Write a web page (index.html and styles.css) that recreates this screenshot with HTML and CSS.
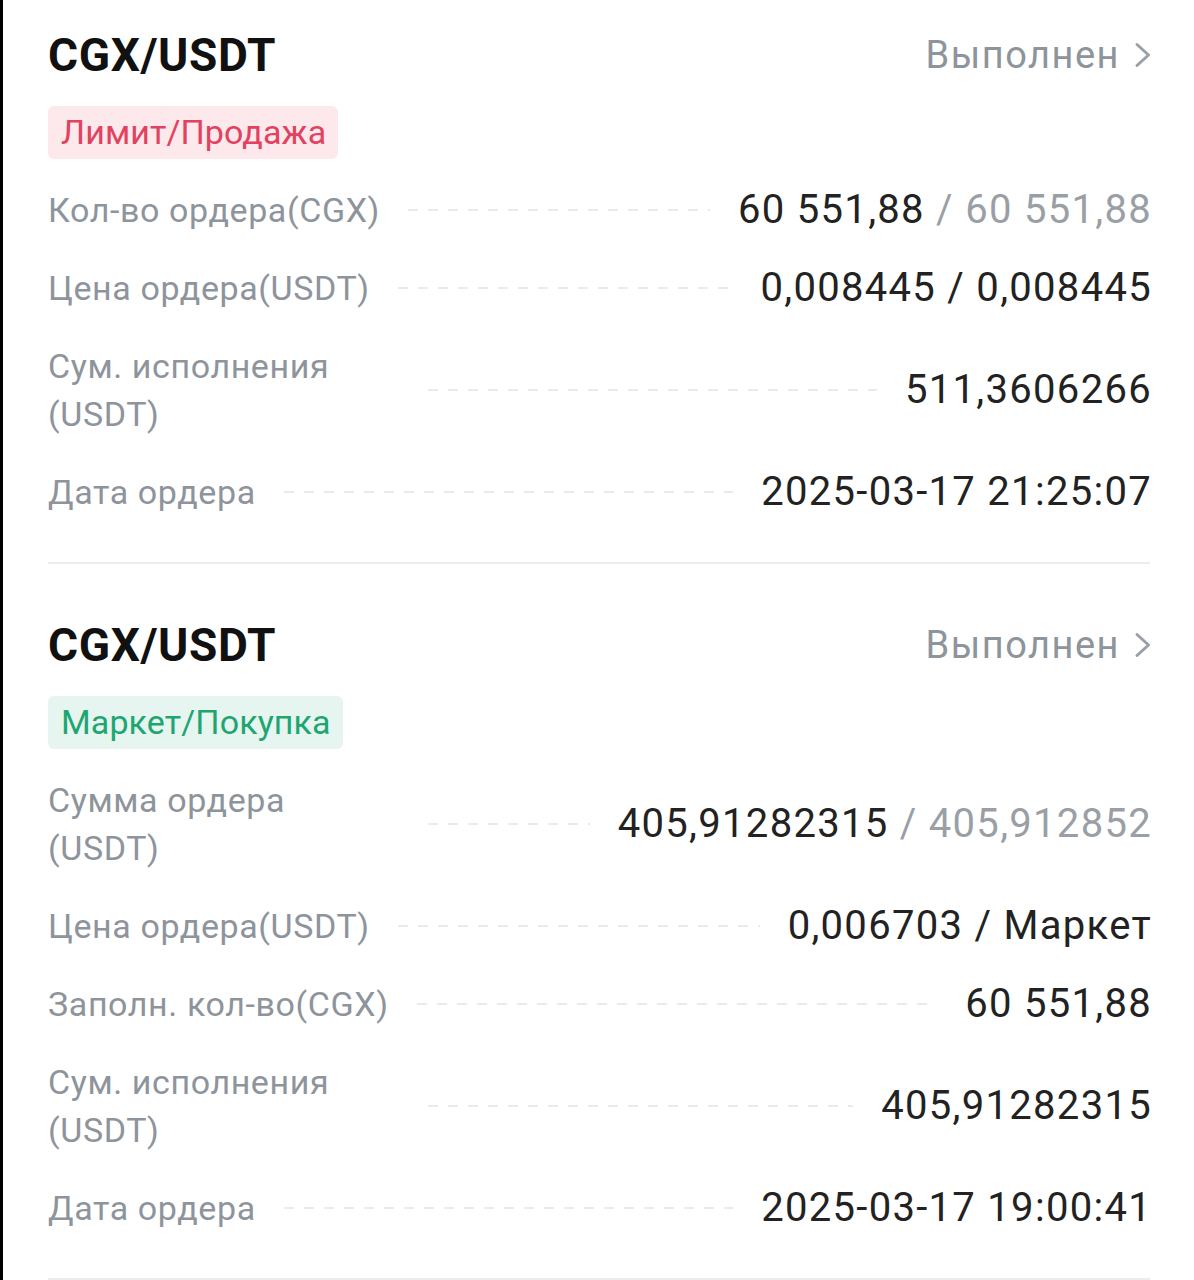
FILE: index.html
```html
<!DOCTYPE html>
<html lang="ru">
<head>
<meta charset="UTF-8">
<meta name="viewport" content="width=device-width, initial-scale=1.0">
<title>История ордеров</title>
<link rel="stylesheet" href="styles.css">
</head>
<body>

<div class="orders">
    <div class="order">
        <div class="order-head">
            <div class="pair">CGX/USDT</div>
            <div class="status">Выполнен
                <svg class="chevron" viewBox="0 0 18 26" width="18" height="26"><path d="M3 2.5 L14.5 13 L3 23.5" fill="none" stroke="#9aa0a8" stroke-width="3" stroke-linecap="round" stroke-linejoin="round"/></svg>
            </div>
        </div>
        <div class="badge badge-sell">Лимит/Продажа</div>
        <div class="rows">
            <div class="row">
                <div class="label">Кол-во ордера(CGX)</div>
                <div class="leader"></div>
                <div class="value">60 551,88 <span class="muted">/ 60 551,88</span></div>
            </div>
            <div class="row">
                <div class="label">Цена ордера(USDT)</div>
                <div class="leader"></div>
                <div class="value">0,008445 / 0,008445</div>
            </div>
            <div class="row">
                <div class="label">Сум. исполнения (USDT)</div>
                <div class="leader"></div>
                <div class="value">511,3606266</div>
            </div>
            <div class="row">
                <div class="label">Дата ордера</div>
                <div class="leader"></div>
                <div class="value">2025-03-17 21:25:07</div>
            </div>
        </div>
    </div>

    <div class="order">
        <div class="order-head">
            <div class="pair">CGX/USDT</div>
            <div class="status">Выполнен
                <svg class="chevron" viewBox="0 0 18 26" width="18" height="26"><path d="M3 2.5 L14.5 13 L3 23.5" fill="none" stroke="#9aa0a8" stroke-width="3" stroke-linecap="round" stroke-linejoin="round"/></svg>
            </div>
        </div>
        <div class="badge badge-buy">Маркет/Покупка</div>
        <div class="rows">
            <div class="row">
                <div class="label">Сумма ордера (USDT)</div>
                <div class="leader"></div>
                <div class="value">405,91282315 <span class="muted">/ 405,912852</span></div>
            </div>
            <div class="row">
                <div class="label">Цена ордера(USDT)</div>
                <div class="leader"></div>
                <div class="value">0,006703 / Маркет</div>
            </div>
            <div class="row">
                <div class="label">Заполн. кол-во(CGX)</div>
                <div class="leader"></div>
                <div class="value">60 551,88</div>
            </div>
            <div class="row">
                <div class="label">Сум. исполнения (USDT)</div>
                <div class="leader"></div>
                <div class="value">405,91282315</div>
            </div>
            <div class="row">
                <div class="label">Дата ордера</div>
                <div class="leader"></div>
                <div class="value">2025-03-17 19:00:41</div>
            </div>
        </div>
    </div>
</div>

</body>
</html>
```

FILE: styles.css
```css
/* Base */
* {
    box-sizing: border-box;
}
body {
    margin: 0;
    background: #fff;
    font-family: Roboto, "Noto Sans", sans-serif;
    color: #222;
}
.orders {
    border-left: 3px solid #000;
    min-height: 1280px;
    padding: 0 44px 0 45px;
}

/* Order card */
.order {
    padding: 54px 0 46px;
    border-bottom: 2px solid #ededed;
}
.order:first-child {
    padding-top: 28px;
}
.order-head {
    display: flex;
    justify-content: space-between;
    align-items: center;
    height: 54px;
}
.pair {
    font-size: 46px;
    font-weight: 700;
    letter-spacing: 0.6px;
    color: #111;
}
.status {
    display: flex;
    align-items: center;
    gap: 14px;
    margin-right: -2px;
    font-size: 38px;
    letter-spacing: 1.5px;
    color: #8e949c;
}
.badge {
    display: inline-block;
    margin-top: 24px;
    padding: 0 12px 0 13px;
    height: 53px;
    line-height: 53px;
    border-radius: 6px;
    font-size: 34px;
    letter-spacing: 0.1px;
}
.badge-sell {
    background: #fde9ec;
    color: #e2415f;
}
.badge-buy {
    background: #e6f5ef;
    color: #1ea672;
}

/* Detail rows */
.rows {
    display: flex;
    flex-direction: column;
    gap: 30px;
    margin-top: 27px;
}
.row {
    display: flex;
    align-items: center;
}
.label {
    max-width: 352px;
    font-size: 34px;
    line-height: 48px;
    letter-spacing: 0.6px;
    color: #8e949c;
}
.leader {
    flex: 1;
    height: 2px;
    margin: 0 28px;
    background: repeating-linear-gradient(to right, #e8eaed 0 10px, transparent 10px 20px);
}
.value {
    margin-right: -2px;
    font-size: 40px;
    line-height: 48px;
    letter-spacing: 1.3px;
    color: #222;
    white-space: nowrap;
}
.value .muted {
    color: #9a9fa6;
}
```
